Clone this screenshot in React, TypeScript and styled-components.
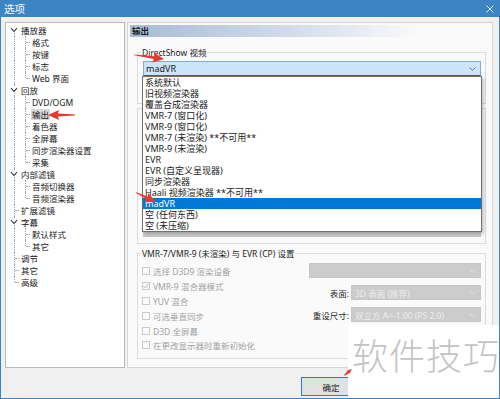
import styled, { createGlobalStyle } from "styled-components";

const GlobalStyle = createGlobalStyle`
  html, body {
    margin: 0;
    padding: 0;
    background: #fff;
  }
  body {
    font-family: "Noto Sans", "Noto Sans CJK SC", sans-serif;
    font-size: 8.5px;
    color: #1a1a1a;
  }
`;

const Window = styled.div`
  position: relative;
  width: 500px;
  height: 399px;
  box-sizing: border-box;
  border: 1px solid #3c84c4;
  border-top: none;
  display: flex;
  flex-direction: column;
  background: #f0f0f0;
  overflow: hidden;
`;

const TitleBar = styled.div`
  height: 17px;
  flex: none;
  margin: 0 -1px;
  padding: 0 6px 0 4px;
  background: #3c84c4;
  color: #fff;
  font-size: 10.5px;
  display: flex;
  align-items: center;
  justify-content: space-between;
`;

const Body = styled.div`
  flex: 1;
  display: flex;
  flex-direction: column;
  padding: 5px 6px 0 4px;
`;

const Main = styled.div`
  display: flex;
  gap: 2px;
  height: 346px;
`;

const Tree = styled.div`
  width: 120px;
  box-sizing: border-box;
  background: #fff;
  border: 1px solid #b9b9b9;
  padding: 1px 0 0 2px;
`;

const TreeRow = styled.div`
  height: 12px;
  display: flex;
  align-items: center;
  white-space: nowrap;
`;

const Guide = styled.span<{ $line: "full" | "top" | "bottom" | "none"; $tick?: boolean }>`
  position: relative;
  flex: none;
  width: 11px;
  height: 100%;
  &::before {
    content: "";
    position: absolute;
    left: 6px;
    top: ${(p) => (p.$line === "bottom" ? "50%" : "0")};
    bottom: ${(p) => (p.$line === "top" ? "50%" : "0")};
    border-left: 1px dotted #a0a0a0;
    display: ${(p) => (p.$line === "none" ? "none" : "block")};
  }
  &::after {
    content: "";
    display: ${(p) => (p.$tick ? "block" : "none")};
    position: absolute;
    left: 7px;
    right: 0;
    top: 50%;
    border-top: 1px dotted #a0a0a0;
  }
`;

const Expander = styled.svg`
  position: absolute;
  z-index: 1;
  left: 2px;
  top: 3px;
  background: #fff;
`;

const TreeLabel = styled.span<{ $selected?: boolean }>`
  margin-left: 1px;
  padding: 0 1px;
  line-height: 11px;
  background: ${(p) => (p.$selected ? "#d9d9d9" : "transparent")};
`;

const Page = styled.div`
  flex: 1;
  box-sizing: border-box;
  border: 1px solid #d6d6d6;
  background: #fafafa;
  padding: 2px;
  display: flex;
  flex-direction: column;
`;

const Header = styled.div`
  height: 12px;
  line-height: 12px;
  padding-left: 2px;
  font-weight: 700;
  background: linear-gradient(to right, #a6bbd7 0%, #d3dcea 45%, #fafafa 80%);
`;

const Group = styled.div<{ $h: number; $mt: number }>`
  position: relative;
  box-sizing: border-box;
  height: ${(p) => p.$h}px;
  margin: ${(p) => p.$mt}px 4px 0 7px;
  border: 1px solid #dcdcdc;
`;

const Legend = styled.span`
  position: absolute;
  top: -6px;
  left: 3px;
  padding: 0 1px;
  line-height: 11px;
  background: #fafafa;
  white-space: nowrap;
`;

const ShowGroup = styled(Group)`
  padding: 8px 4px 0 5px;
`;

const RenderGroup = styled(Group)`
  display: flex;
  flex-direction: column;
  justify-content: flex-end;
  padding: 0 4px 6px 5px;
`;

const SettingsGroup = styled(Group)`
  display: flex;
  justify-content: space-between;
  padding: 0 4px 0 4px;
`;

const ActiveCombo = styled.div`
  position: relative;
  height: 15px;
  box-sizing: border-box;
  border: 1px solid #7eaedc;
  border-bottom-color: #2b68a8;
  background: #cce4f7;
  padding: 0 4px 0 2px;
  display: flex;
  align-items: center;
  justify-content: space-between;
  font-size: 9px;
`;

const DropList = styled.div`
  position: absolute;
  top: calc(100% + 1px);
  left: -2px;
  right: -2px;
  z-index: 5;
  background: #fff;
  border: 1px solid #6f6f6f;
  box-shadow: 2px 2px 3px rgba(0, 0, 0, 0.22);
`;

const DropItem = styled.div<{ $selected?: boolean }>`
  height: 11px;
  line-height: 11px;
  padding-left: 2px;
  white-space: nowrap;
  background: ${(p) => (p.$selected ? "#0078d7" : "#fff")};
  color: ${(p) => (p.$selected ? "#fff" : "#1a1a1a")};
`;

const GrayCombo = styled.div<{ $w?: number }>`
  height: 15px;
  box-sizing: border-box;
  width: ${(p) => (p.$w ? `${p.$w}px` : "100%")};
  background: #cccccc;
  border: 1px solid #c6c6c6;
  color: #ededed;
  padding: 0 4px 0 3px;
  display: flex;
  align-items: center;
  justify-content: space-between;
  white-space: nowrap;
`;

const CheckList = styled.div`
  padding-top: 10px;
  display: flex;
  flex-direction: column;
`;

const CheckRow = styled.div`
  height: 14.8px;
  display: flex;
  align-items: center;
  gap: 3px;
  color: #a3a3a3;
  white-space: nowrap;
`;

const Box = styled.span`
  position: relative;
  width: 8px;
  height: 8px;
  box-sizing: border-box;
  border: 1px solid #cacaca;
  background: #fbfbfb;
`;

const Tick = styled.svg`
  position: absolute;
  left: 0;
  top: 0;
`;

const RightCol = styled.div`
  width: 172px;
  padding-top: 9px;
  display: flex;
  flex-direction: column;
  align-items: flex-end;
  gap: 7px;
`;

const FieldRow = styled.div`
  display: flex;
  align-items: center;
  gap: 2px;
  color: #2a2a2a;
`;

const Footer = styled.div`
  display: flex;
  justify-content: flex-end;
  gap: 6px;
  padding: 9px 0 0 0;
`;

const Button = styled.button<{ $default?: boolean }>`
  width: 60px;
  height: 19px;
  padding: 0;
  font: inherit;
  color: #1a1a1a;
  background: #e1e1e1;
  border: 1px solid ${(p) => (p.$default ? "#2a7ad0" : "#adadad")};
`;

const Watermark = styled.div`
  position: absolute;
  left: 347px;
  top: 325px;
  right: 0;
  bottom: 0;
  z-index: 10;
  background: #fff;
  padding: 11px 0 0 4px;
  box-sizing: border-box;
  font-family: "Noto Sans CJK SC", sans-serif;
  font-weight: 300;
  font-size: 36px;
  line-height: 1;
  letter-spacing: 1px;
  color: #c4c4c4;
  white-space: nowrap;
`;

const ArrowMark = styled.svg<{ $x: number; $y: number; $w: number; $rot: number }>`
  position: absolute;
  z-index: 20;
  left: ${(p) => p.$x - p.$w}px;
  top: ${(p) => p.$y - 5}px;
  transform-origin: 100% 50%;
  transform: rotate(${(p) => p.$rot}deg);
  overflow: visible;
`;

const Chevron = ({ color = "#6a6a6a" }: { color?: string }) => (
  <svg width="7" height="4" viewBox="0 0 7 4">
    <polyline points="0.5,0.5 3.5,3.3 6.5,0.5" fill="none" stroke={color} strokeWidth="0.9" />
  </svg>
);

const Arrow = ({ x, y, w, rot }: { x: number; y: number; w: number; rot: number }) => {
  const h = Math.min(10, w * 0.45);
  const d = `M0,4.6 L${w - h},3.6 L${w - h - 1},${5 - h / 2} L${w},5 L${w - h - 1},${5 + h / 2} L${w - h},6.4 L0,5.4 Z`;
  return (
    <ArrowMark $x={x} $y={y} $w={w} $rot={rot} width={w} height={10} viewBox={`0 0 ${w} 10`}>
      <path d={d} fill="#e8392e" />
    </ArrowMark>
  );
};

type Node = { label: string; level: 0 | 1; open?: boolean; last?: boolean; selected?: boolean };

const TREE: Node[] = [
  { label: "播放器", level: 0, open: true },
  { label: "格式", level: 1 },
  { label: "按键", level: 1 },
  { label: "标志", level: 1 },
  { label: "Web 界面", level: 1, last: true },
  { label: "回放", level: 0, open: true },
  { label: "DVD/OGM", level: 1 },
  { label: "输出", level: 1, selected: true },
  { label: "着色器", level: 1 },
  { label: "全屏幕", level: 1 },
  { label: "同步渲染器设置", level: 1 },
  { label: "采集", level: 1, last: true },
  { label: "内部滤镜", level: 0, open: true },
  { label: "音频切换器", level: 1 },
  { label: "音频渲染器", level: 1, last: true },
  { label: "扩展滤镜", level: 0 },
  { label: "字幕", level: 0, open: true },
  { label: "默认样式", level: 1 },
  { label: "其它", level: 1, last: true },
  { label: "调节", level: 0 },
  { label: "其它", level: 0 },
  { label: "高级", level: 0 },
];

const RENDERERS = [
  "系统默认",
  "旧视频渲染器",
  "覆盖合成渲染器",
  "VMR-7 (窗口化)",
  "VMR-9 (窗口化)",
  "VMR-7 (未渲染) **不可用**",
  "VMR-9 (未渲染)",
  "EVR",
  "EVR (自定义呈现器)",
  "同步渲染器",
  "Haali 视频渲染器 **不可用**",
  "madVR",
  "空 (任何东西)",
  "空 (未压缩)",
];

const CHECKS = [
  { label: "选择 D3D9 渲染设备", checked: false },
  { label: "VMR-9 混合器模式", checked: true },
  { label: "YUV 混合", checked: false },
  { label: "可选垂直同步", checked: false },
  { label: "D3D 全屏幕", checked: false },
  { label: "在更改显示器时重新初始化", checked: false },
];

export default function App() {
  return (
    <>
      <GlobalStyle />
      <Window>
        <TitleBar>
          <span>选项</span>
          <svg width="8" height="8" viewBox="0 0 8 8">
            <path d="M0.5,0.5 L7.5,7.5 M7.5,0.5 L0.5,7.5" stroke="#fff" strokeWidth="0.9" />
          </svg>
        </TitleBar>
        <Body>
          <Main>
            <Tree>
              {TREE.map((n, i) => {
                const rootLine = i === 0 ? "bottom" : i === TREE.length - 1 ? "top" : "full";
                return (
                  <TreeRow key={i}>
                    <Guide $line={n.level === 0 ? rootLine : "full"} $tick={n.level === 0 && !n.open}>
                      {n.level === 0 && n.open && (
                        <Expander width="8" height="6" viewBox="0 0 8 6">
                          <polyline points="1,1.2 4,4.4 7,1.2" fill="none" stroke="#3a3a3a" strokeWidth="1.1" />
                        </Expander>
                      )}
                    </Guide>
                    {n.level === 1 && <Guide $line={n.last ? "top" : "full"} $tick />}
                    <TreeLabel $selected={n.selected}>{n.label}</TreeLabel>
                  </TreeRow>
                );
              })}
            </Tree>
            <Page>
              <Header>输出</Header>
              <ShowGroup $h={52} $mt={15}>
                <Legend>DirectShow 视频</Legend>
                <ActiveCombo>
                  <span>madVR</span>
                  <Chevron />
                  <DropList>
                    {RENDERERS.map((r) => (
                      <DropItem key={r} $selected={r === "madVR"}>
                        {r}
                      </DropItem>
                    ))}
                  </DropList>
                </ActiveCombo>
              </ShowGroup>
              <RenderGroup $h={136} $mt={4}>
                <GrayCombo>
                  <span />
                  <Chevron color="#e4e4e4" />
                </GrayCombo>
              </RenderGroup>
              <SettingsGroup $h={106} $mt={9}>
                <Legend>VMR-7/VMR-9 (未渲染) 与 EVR (CP) 设置</Legend>
                <CheckList>
                  {CHECKS.map((c) => (
                    <CheckRow key={c.label}>
                      <Box>
                        {c.checked && (
                          <Tick width="6" height="6" viewBox="0 0 6 6">
                            <polyline points="0.5,3 2.3,4.8 5.5,0.8" fill="none" stroke="#b0b0b0" strokeWidth="0.9" />
                          </Tick>
                        )}
                      </Box>
                      <span>{c.label}</span>
                    </CheckRow>
                  ))}
                </CheckList>
                <RightCol>
                  <GrayCombo>
                    <span />
                    <Chevron color="#e4e4e4" />
                  </GrayCombo>
                  <FieldRow>
                    <span>表面:</span>
                    <GrayCombo $w={130}>
                      <span>3D 表面 (推荐)</span>
                      <Chevron color="#e4e4e4" />
                    </GrayCombo>
                  </FieldRow>
                  <FieldRow>
                    <span>重设尺寸:</span>
                    <GrayCombo $w={130}>
                      <span>双立方 A=-1.00 (PS 2.0)</span>
                      <Chevron color="#e4e4e4" />
                    </GrayCombo>
                  </FieldRow>
                </RightCol>
              </SettingsGroup>
            </Page>
          </Main>
          <Footer>
            <Button $default>确定</Button>
            <Button>取消</Button>
            <Button>应用</Button>
          </Footer>
        </Body>
        <Arrow x={47} y={115} w={27} rot={180} />
        <Arrow x={163} y={59} w={30} rot={8} />
        <Arrow x={155} y={202} w={22} rot={25} />
        <Arrow x={351} y={369} w={10} rot={-40} />
        <Watermark>软件技巧</Watermark>
      </Window>
    </>
  );
}
